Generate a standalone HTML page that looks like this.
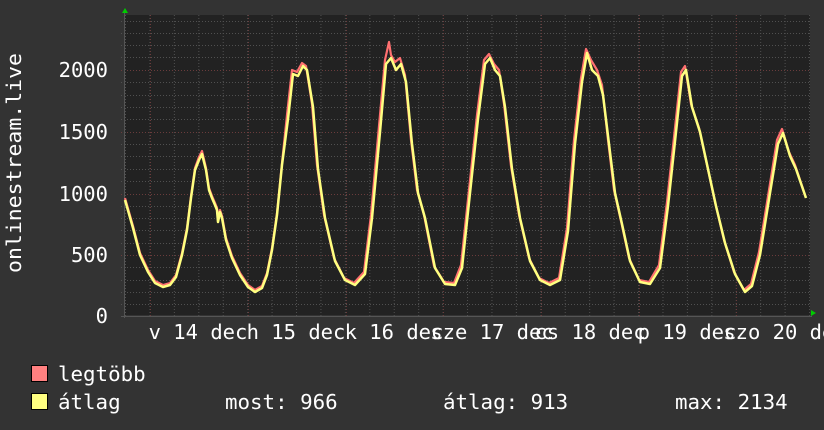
<!DOCTYPE html>
<html><head><meta charset="utf-8"><style>
html,body{margin:0;padding:0;background:#333;width:824px;height:430px;overflow:hidden;}
svg{display:block;}
svg text{font-family:"DejaVu Sans Mono","Liberation Mono",monospace;fill:#fff;}
</style></head><body>
<svg width="824" height="430" xmlns="http://www.w3.org/2000/svg">
<defs>
<pattern id="vg" x="125" y="0" width="24.43" height="430" patternUnits="userSpaceOnUse">
<line x1="0.5" y1="0" x2="0.5" y2="430" stroke="#505050" stroke-dasharray="1,2"/>
</pattern>
</defs>
<rect x="0" y="0" width="824" height="430" fill="#333"/>
<rect x="125" y="15" width="685" height="300" fill="#222"/>
<g stroke="#505050" stroke-dasharray="1,2" stroke-width="1">
<line x1="121" x2="810" y1="21.5" y2="21.5"/><line x1="121" x2="810" y1="33.5" y2="33.5"/><line x1="121" x2="810" y1="45.5" y2="45.5"/><line x1="121" x2="810" y1="57.5" y2="57.5"/>
<line x1="121" x2="810" y1="82.5" y2="82.5"/><line x1="121" x2="810" y1="95.5" y2="95.5"/><line x1="121" x2="810" y1="107.5" y2="107.5"/><line x1="121" x2="810" y1="119.5" y2="119.5"/>
<line x1="121" x2="810" y1="144.5" y2="144.5"/><line x1="121" x2="810" y1="156.5" y2="156.5"/><line x1="121" x2="810" y1="169.5" y2="169.5"/><line x1="121" x2="810" y1="181.5" y2="181.5"/>
<line x1="121" x2="810" y1="206.5" y2="206.5"/><line x1="121" x2="810" y1="218.5" y2="218.5"/><line x1="121" x2="810" y1="230.5" y2="230.5"/><line x1="121" x2="810" y1="243.5" y2="243.5"/>
<line x1="121" x2="810" y1="267.5" y2="267.5"/><line x1="121" x2="810" y1="280.5" y2="280.5"/><line x1="121" x2="810" y1="292.5" y2="292.5"/><line x1="121" x2="810" y1="304.5" y2="304.5"/>
</g>
<rect x="125" y="15" width="685" height="302" fill="url(#vg)"/>
<g stroke="#6a3c3c" stroke-dasharray="1,2" stroke-width="1">
<line x1="121" x2="810" y1="70.5" y2="70.5"/><line x1="121" x2="810" y1="132.5" y2="132.5"/><line x1="121" x2="810" y1="194.5" y2="194.5"/><line x1="121" x2="810" y1="255.5" y2="255.5"/>
<line x1="150.5" x2="150.5" y1="15" y2="318"/><line x1="248.5" x2="248.5" y1="15" y2="318"/><line x1="346.5" x2="346.5" y1="15" y2="318"/><line x1="443.5" x2="443.5" y1="15" y2="318"/><line x1="541.5" x2="541.5" y1="15" y2="318"/><line x1="639.5" x2="639.5" y1="15" y2="318"/><line x1="736.5" x2="736.5" y1="15" y2="318"/>
</g>
<line x1="124.5" y1="12" x2="124.5" y2="318" stroke="#555"/>
<line x1="121" y1="316.5" x2="812" y2="316.5" stroke="#555"/>
<polygon points="122,13 125,8 128,13" fill="#0c0"/>
<polygon points="811,310 816,313 811,316" fill="#0c0"/>
<polyline fill="none" stroke="#ff7070" stroke-width="2.2" stroke-linejoin="round" points="125,198 133,226 140,253 148,270 155,281 163,285 170,283 176,275 182,253 187,228 191,196 195,168 199,157 202,151 206,168 209,188 212,196 215,203 217,208 218,220 220,210 222,216 226,238 232,256 240,273 248,285 255,290 262,286 267,273 272,248 277,213 282,163 287,115 292,70 297,72 302,63 306,66 312,104 317,165 324,215 334,258 344,278 354,283 364,272 371,215 379,126 385,60 389,42 391,55 395,62 400,58 405,75 411,140 417,190 424,215 434,266 444,282 454,283 461,265 469,190 477,115 484,60 489,54 494,64 499,70 504,104 511,166 519,215 529,258 539,278 549,283 559,278 567,228 574,140 581,78 586,49 591,60 597,70 602,85 608,140 614,190 621,221 629,258 639,280 649,282 659,265 667,202 675,128 681,72 685,66 691,104 699,128 707,165 715,202 724,240 734,272 744,290 751,284 759,252 769,190 777,140 782,129 789,152 795,165 805,195"/>
<polyline fill="none" stroke="#ffff80" stroke-width="2.5" stroke-linejoin="round" points="125,200 133,228 140,255 148,272 155,283 163,287 170,285 176,277 182,255 187,230 191,198 195,170 199,160 202,154 206,170 209,190 212,198 215,205 217,210 218,222 220,212 222,218 226,240 232,258 240,275 248,287 255,292 262,288 267,275 272,250 277,215 282,165 288,119 293,74 298,76 303,66 307,70 313,107 318,169 325,218 335,261 345,280 355,285 365,274 372,218 380,132 386,64 391,58 396,70 401,64 406,82 412,144 418,193 425,218 435,268 445,284 455,285 462,268 470,193 478,119 485,64 490,58 495,70 500,76 505,107 512,169 520,218 530,261 540,280 550,285 560,280 568,231 575,144 582,82 587,53 592,70 598,76 603,95 609,144 615,193 622,224 630,261 640,282 650,284 660,268 668,206 676,132 682,76 686,70 692,107 700,132 708,169 716,206 725,243 735,274 745,292 752,286 760,255 770,193 778,144 783,133 790,156 796,169 806,198"/>
<g font-size="20.5" text-anchor="end">
<text x="108" y="77">2000</text><text x="108" y="139">1500</text><text x="108" y="201">1000</text><text x="108" y="262">500</text><text x="108" y="323">0</text>
</g>
<g font-size="20.5" text-anchor="middle">
<text x="198" y="339">v 14 dec</text><text x="296" y="339">h 15 dec</text><text x="394" y="339">k 16 dec</text><text x="492" y="339">sze 17 dec</text><text x="590" y="339">cs 18 dec</text><text x="687" y="339">p 19 dec</text><text x="785" y="339">szo 20 dec</text>
</g>
<text font-size="20.5" transform="translate(21,273) rotate(-90)" textLength="220" lengthAdjust="spacingAndGlyphs">onlinestream.live</text>
<rect x="31.5" y="365.5" width="16" height="16" fill="#ff8080" stroke="#000"/>
<rect x="31.5" y="393.5" width="16" height="16" fill="#ffff80" stroke="#000"/>
<g font-size="20.8">
<text x="58" y="381">legtöbb</text>
<text x="58" y="409">átlag</text>
<text x="225" y="409">most: 966</text>
<text x="443" y="409">átlag: 913</text>
<text x="675" y="409">max: 2134</text>
</g>
</svg>
</body></html>
